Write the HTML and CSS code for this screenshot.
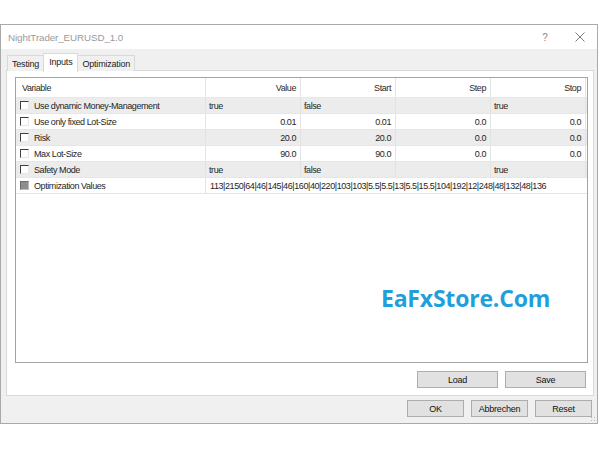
FILE: index.html
```html
<!DOCTYPE html>
<html>
<head>
<meta charset="utf-8">
<link rel="stylesheet" href="styles.css">
</head>
<body>
<div class="window">
  <div class="titlebar">
    <span class="title">NightTrader_EURUSD_1.0</span>
    <span class="ctl help">?</span>
    <span class="ctl close">
      <svg width="10" height="10" viewBox="0 0 10 10"><path d="M0.5 0.5 L9.5 9.5 M9.5 0.5 L0.5 9.5" stroke="#7a7a7a" stroke-width="1" fill="none"/></svg>
    </span>
  </div>
  <div class="client">
    <div class="tabs">
      <div class="tab">Testing</div>
      <div class="tab active">Inputs</div>
      <div class="tab">Optimization</div>
    </div>
    <div class="panel">
      <div class="list">
        <div class="row head">
          <div class="cell">Variable</div>
          <div class="cell num">Value</div>
          <div class="cell num">Start</div>
          <div class="cell num">Step</div>
          <div class="cell num">Stop</div>
        </div>
        <div class="row alt">
          <div class="cell var"><span class="cb"></span>Use dynamic Money-Management</div>
          <div class="cell">true</div>
          <div class="cell">false</div>
          <div class="cell"></div>
          <div class="cell">true</div>
        </div>
        <div class="row">
          <div class="cell var"><span class="cb"></span>Use only fixed Lot-Size</div>
          <div class="cell num">0.01</div>
          <div class="cell num">0.01</div>
          <div class="cell num">0.0</div>
          <div class="cell num">0.0</div>
        </div>
        <div class="row alt">
          <div class="cell var"><span class="cb"></span>Risk</div>
          <div class="cell num">20.0</div>
          <div class="cell num">20.0</div>
          <div class="cell num">0.0</div>
          <div class="cell num">0.0</div>
        </div>
        <div class="row">
          <div class="cell var"><span class="cb"></span>Max Lot-Size</div>
          <div class="cell num">90.0</div>
          <div class="cell num">90.0</div>
          <div class="cell num">0.0</div>
          <div class="cell num">0.0</div>
        </div>
        <div class="row alt">
          <div class="cell var"><span class="cb"></span>Safety Mode</div>
          <div class="cell">true</div>
          <div class="cell">false</div>
          <div class="cell"></div>
          <div class="cell">true</div>
        </div>
        <div class="row">
          <div class="cell var"><span class="cb dis"></span>Optimization Values</div>
          <div class="cell span">113|2150|64|46|145|46|160|40|220|103|103|5.5|5.5|13|5.5|15.5|104|192|12|248|48|132|48|136</div>
        </div>
        <div class="watermark">EaFxStore.Com</div>
      </div>
      <div class="panel-buttons">
        <button class="btn wide">Load</button>
        <button class="btn wide">Save</button>
      </div>
    </div>
    <div class="footer">
      <button class="btn">OK</button>
      <button class="btn">Abbrechen</button>
      <button class="btn">Reset</button>
    </div>
    <div class="grip"></div>
  </div>
</div>
</body>
</html>
```

FILE: styles.css
```css
* { box-sizing: border-box; }
html, body { margin: 0; padding: 0; background: #ffffff; }
body {
  font-family: "Liberation Sans", Arial, sans-serif;
  font-size: 9px;
  color: #1e1e1e;
  width: 600px;
  height: 450px;
  overflow: hidden;
}
.window {
  margin-top: 24px;
  width: 598px;
  height: 400px;
  border: 1px solid #a9a9a9;
  display: flex;
  flex-direction: column;
  background: #f0f0f0;
}
.titlebar {
  height: 24px;
  background: #ffffff;
  display: flex;
  align-items: center;
  padding-left: 7px;
  flex: none;
}
.title {
  font-size: 9.8px;
  color: #9a9a9a;
  flex: 1;
  letter-spacing: -0.1px;
}
.ctl { color: #8a8a8a; display: flex; align-items: center; justify-content: center; }
.help { font-size: 10px; width: 10px; margin-right: 25px; }
.close { width: 10px; margin-right: 12px; }
.client {
  flex: 1;
  position: relative;
  padding: 4px 3px 6px 5px;
  display: flex;
  flex-direction: column;
}
.tabs {
  height: 18px;
  display: flex;
  align-items: flex-end;
  padding-left: 1px;
  position: relative;
  z-index: 1;
}
.tab {
  height: 16px;
  padding: 0 4px;
  border: 1px solid #d9d9d9;
  border-bottom: none;
  background: #f0f0f0;
  display: flex;
  align-items: center;
  font-size: 9px;
  letter-spacing: -0.2px;
  color: #222;
}
.tab + .tab { margin-left: -1px; }
.tab.active {
  height: 19px;
  margin-bottom: -1px;
  background: #ffffff;
  padding-bottom: 3px;
  padding-left: 5px;
  padding-right: 5px;
}
.panel {
  margin-top: -1px;
  height: 326px;
  width: 588px;
  background: #ffffff;
  border: 1px solid #d9d9d9;
  padding: 6px 5px 7px 8px;
  display: flex;
  flex-direction: column;
}
.list {
  position: relative;
  height: 286px;
  border: 1px solid #a3a3a3;
  background: #ffffff;
  flex: none;
}
.row {
  display: grid;
  grid-template-columns: 190px 95px 95px 95px 95px;
  height: 16px;
  border-bottom: 1px solid #e6e6e6;
  background: #ffffff;
}
.row.alt { background: #ececec; }
.row.head {
  height: 20px;
  border-bottom: 1px solid #e8e8e8;
}
.cell {
  border-right: 1px solid #e3e3e3;
  display: flex;
  align-items: center;
  padding: 0 3px;
  white-space: nowrap;
  letter-spacing: -0.42px;
  overflow: hidden;
}
.head .cell { color: #2a2a2a; }
.head .cell:first-child { padding-left: 6px; }
.cell.num { justify-content: flex-end; padding-right: 4px; }
.cell.var { padding-left: 4px; }
.cell.span {
  grid-column: 2 / 6;
  border-right: none;
  padding-left: 4px;
}
.cb {
  width: 9px;
  height: 9px;
  flex: none;
  border-top: 1px solid #3f3f3f;
  border-left: 1px solid #3f3f3f;
  border-right: 1px solid #e6e6e6;
  border-bottom: 1px solid #e6e6e6;
  background: #ffffff;
  margin-right: 5px;
}
.cb.dis {
  background: #8e8e8e;
  border-top-color: #6e6e6e;
  border-left-color: #6e6e6e;
  border-right-color: #bcbcbc;
  border-bottom-color: #bcbcbc;
}
.watermark {
  position: absolute;
  left: 365px;
  top: 209px;
  font-family: "Open Sans", "Noto Sans", sans-serif;
  font-weight: 700;
  font-size: 23px;
  line-height: 22px;
  color: #1f9fdc;
  letter-spacing: -0.2px;
}
.panel-buttons {
  margin-top: 8px;
  display: flex;
  justify-content: flex-end;
  gap: 7px;
  padding-right: 2px;
}
.btn {
  font-family: "Liberation Sans", Arial, sans-serif;
  font-size: 9px;
  letter-spacing: -0.2px;
  color: #111;
  background: #e1e1e1;
  border: 1px solid #adadad;
  border-radius: 0;
  height: 17px;
  width: 57px;
  padding: 0;
  margin: 0;
}
.btn.wide { width: 81px; }
.footer {
  margin-top: 4px;
  display: flex;
  justify-content: flex-end;
  gap: 7px;
  padding-right: 2px;
}
.grip {
  position: absolute;
  right: 1px;
  bottom: 1px;
  width: 6px;
  height: 6px;
  background:
    radial-gradient(circle, #b5b5b5 0.8px, transparent 1px) 0 0 / 3px 3px;
}
```
